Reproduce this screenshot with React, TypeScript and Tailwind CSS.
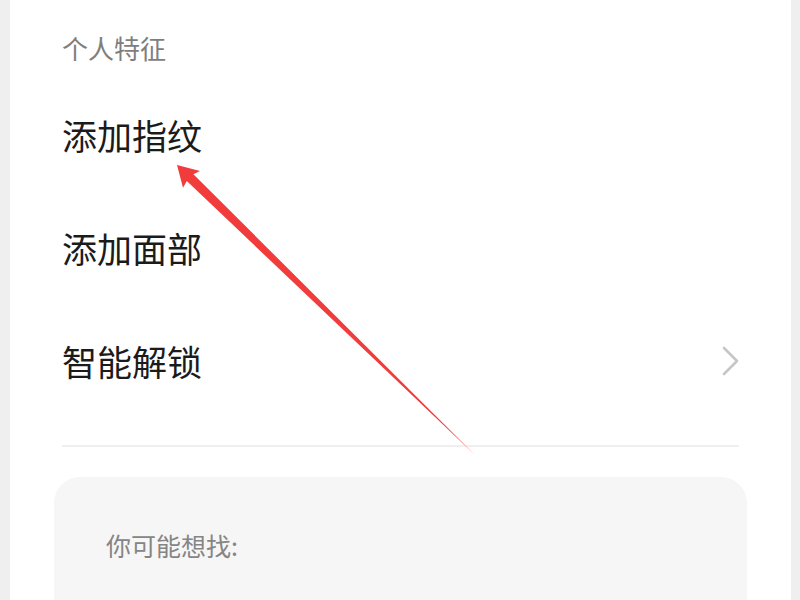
import React from "react";

const font = { fontFamily: '"Noto Sans CJK SC", "Noto Sans", sans-serif' };

function Row({ label, chevron }: { label: string; chevron?: boolean }) {
  return (
    <div className="flex h-[113px] items-center justify-between">
      <span className="text-[35px] leading-[40px] text-[#1b1b1b]">{label}</span>
      {chevron && (
        <svg width="20" height="32" viewBox="0 0 20 32" className="mr-[-2px]">
          <path
            d="M3 3 L16 16 L3 29"
            fill="none"
            stroke="#c6c6c6"
            strokeWidth="2.6"
            strokeLinecap="round"
            strokeLinejoin="round"
          />
        </svg>
      )}
    </div>
  );
}

export default function App() {
  return (
    <div className="relative h-[600px] w-[800px] overflow-hidden bg-[#efefef]" style={font}>
      <div className="ml-[10px] h-full w-[781px] bg-white">
        <div className="px-[52px]">
          <div className="h-[78px] pt-[34px]">
            <span className="block text-[26px] leading-[28px] text-[#7e7e7e]">个人特征</span>
          </div>
          <Row label="添加指纹" />
          <Row label="添加面部" />
          <Row label="智能解锁" chevron />
          <div className="mt-[28px] h-[2px] bg-[#efefef]" />
        </div>
        <div className="mx-[44px] mt-[30px] h-[200px] rounded-[26px] bg-[#f6f6f6] px-[52px] pt-[54px]">
          <span className="block text-[25px] leading-[28px] text-[#858585]">你可能想找:</span>
        </div>
      </div>

      {/* annotation arrow */}
      <svg
        className="pointer-events-none absolute left-0 top-0"
        width="800"
        height="600"
        viewBox="0 0 800 600"
      >
        <polygon
          points="177,165 200,171 193.4,174.2 475,455 186.8,181.1 183,187.8"
          fill="#f23b3b"
        />
      </svg>
    </div>
  );
}
